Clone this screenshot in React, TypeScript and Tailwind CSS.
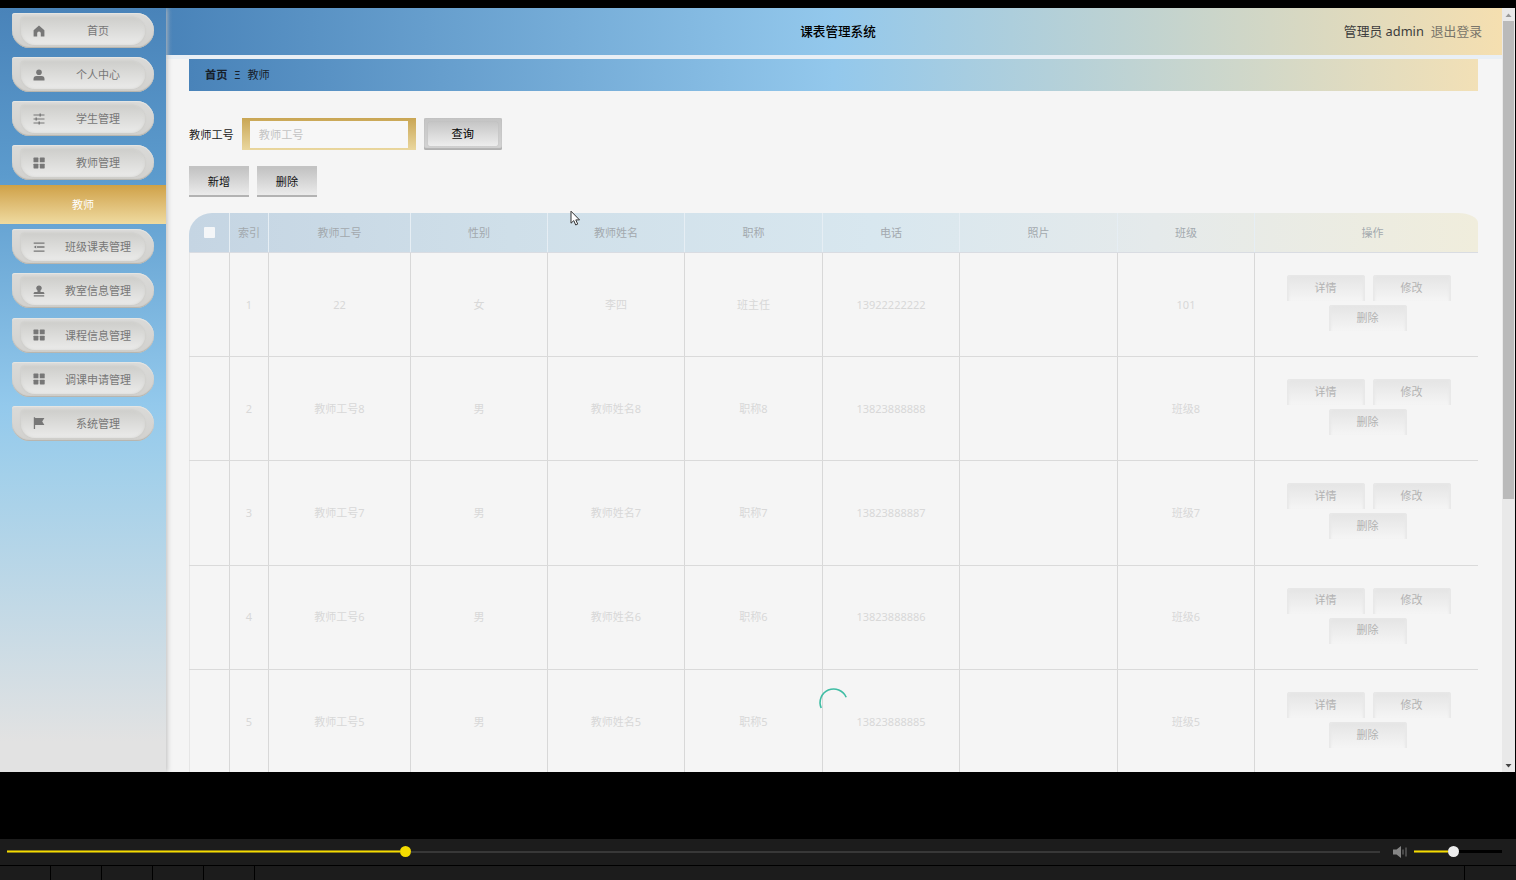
import React from 'react';

type IconName = 'home' | 'user' | 'operation' | 'grid' | 'fold' | 'stamp' | 'flag';

const menuTop: { icon: IconName; label: string }[] = [
  { icon: 'home', label: '首页' },
  { icon: 'user', label: '个人中心' },
  { icon: 'operation', label: '学生管理' },
  { icon: 'grid', label: '教师管理' },
];

const menuBottom: { icon: IconName; label: string }[] = [
  { icon: 'fold', label: '班级课表管理' },
  { icon: 'stamp', label: '教室信息管理' },
  { icon: 'grid', label: '课程信息管理' },
  { icon: 'grid', label: '调课申请管理' },
  { icon: 'flag', label: '系统管理' },
];

const columns = ['索引', '教师工号', '性别', '教师姓名', '职称', '电话', '照片', '班级'];

const rows = [
  ['1', '22', '女', '李四', '班主任', '13922222222', '', '101'],
  ['2', '教师工号8', '男', '教师姓名8', '职称8', '13823888888', '', '班级8'],
  ['3', '教师工号7', '男', '教师姓名7', '职称7', '13823888887', '', '班级7'],
  ['4', '教师工号6', '男', '教师姓名6', '职称6', '13823888886', '', '班级6'],
  ['5', '教师工号5', '男', '教师姓名5', '职称5', '13823888885', '', '班级5'],
];

const gridCols = 'grid grid-cols-[41px_39px_142px_137px_137px_138px_137px_158px_137px_223px]';

const MenuIcon: React.FC<{ name: IconName }> = ({ name }) => (
  <svg width="12" height="12" viewBox="0 0 12 12" fill="currentColor" className="shrink-0">
    {name === 'home' && <path d="M6 .6 11.4 5.2V11.4H7.8V8.2a1.8 1.8 0 0 0-3.6 0v3.2H.6V5.2z" />}
    {name === 'user' && (
      <>
        <circle cx="6" cy="3.2" r="2.8" />
        <path d="M.5 11.4V10a3 3 0 0 1 3-3h5a3 3 0 0 1 3 3v1.4z" />
      </>
    )}
    {name === 'operation' && (
      <path d="M.5 1.6h6V.6h1.4v1h3.6v1H7.9v1H6.5v-1h-6zM.5 5.5h2V4.6h1.4v.9h7.6v1H3.9v1H2.5v-1h-2zM.5 9.4h5v-1h1.4v1h4.6v1H6.9v1H5.5v-1h-5z" />
    )}
    {name === 'grid' && (
      <>
        <rect x=".5" y=".6" width="4.9" height="4.7" rx=".6" />
        <rect x="6.8" y=".6" width="4.9" height="4.7" rx=".6" />
        <rect x=".5" y="6.7" width="4.9" height="4.7" rx=".6" />
        <rect x="6.8" y="6.7" width="4.9" height="4.7" rx=".6" />
      </>
    )}
    {name === 'fold' && <path d="M.7 1.4h10.8v1.4H.7zM4 5.3h7.5v1.4H4zM.7 9.4h10.8v1.4H.7zM.7 6 3.2 4.5v3z" />}
    {name === 'stamp' && (
      <path d="M6 .4a2.7 2.7 0 0 1 1.5 5v1.5h2.3c1 0 1.6.6 1.6 1.5v.7H.6v-.7c0-.9.6-1.5 1.6-1.5h2.3V5.4A2.7 2.7 0 0 1 6 .4zM.8 10.2h10.4v1.2H.8z" />
    )}
    {name === 'flag' && <path d="M.8.2h1.3v11.7H.8zM2 1h9.4L9.2 4.4l2.2 3.5H2z" />}
  </svg>
);

const MenuItem: React.FC<{ icon: IconName; label: string }> = ({ icon, label }) => (
  <div className="ml-3 mb-[9.1px] h-[35px] w-[142px] rounded-[3px_18px_18px_18px] bg-gradient-to-b from-[#dadad8] to-[#d2d1ce] px-[9px] pt-1 pb-[3px] shadow-[inset_0_1px_1px_#e6e6e4,inset_0_-1px_1px_#b5b3ac]">
    <div className="flex h-full items-center rounded-[3px_14px_14px_14px] bg-gradient-to-b from-[#cececb] to-[#ebebea] pb-px pl-3 text-[#777] shadow-[0_0_2px_#c4c4c0,inset_0_0_3px_#d4d4d1]">
      <MenuIcon name={icon} />
      <span className="flex-1 pl-[11px] pr-[5px] text-center text-[11px] leading-none whitespace-nowrap">{label}</span>
    </div>
  </div>
);

const RowButton: React.FC<{ children: string; className?: string }> = ({ children, className = '' }) => (
  <div
    className={`flex h-[26px] w-[78px] items-center justify-center rounded-t-[3px] bg-gradient-to-b from-[#e4e4e4] to-[#f5f5f5] text-[#b3b3b3] shadow-[inset_3px_2px_2px_-1px_#e8e8e8,inset_-3px_0_2px_-1px_#e8e8e8] ${className}`}
  >
    {children}
  </div>
);

const Sidebar = () => (
  <aside className="z-10 w-[166px] shrink-0 bg-[linear-gradient(180deg,#4983b9_0%,#5c9bcd_22%,#93c9ec_52%,#a3d0ea_61%,#e2e2e2_96%)] pt-[5px] shadow-[1px_0_5px_#bbb]">
    {menuTop.map((m) => (
      <MenuItem key={m.label} {...m} />
    ))}
    <div className="-mt-1 mb-[5px] flex h-[39px] items-center justify-center bg-gradient-to-b from-[#cfa146] to-[#efdba0] pt-px text-[11px] text-white">
      教师
    </div>
    {menuBottom.map((m) => (
      <MenuItem key={m.label} {...m} />
    ))}
  </aside>
);

const TeacherTable = () => (
  <div className="mt-4 w-[1289px] text-[11px]">
    <div
      className={`${gridCols} h-[40px] overflow-hidden rounded-[23px_20px_0_0/22px_10px_0_0] border-b border-[#d9dce2] bg-[linear-gradient(90deg,#c5d5e3_0%,#cfdfe9_25%,#d8e7ef_53%,#e5eaeb_75%,#f0eddc_100%)] text-[#a3a9ae]`}
    >
      <div className="flex items-center justify-center border-r border-[#e6eef4]">
        <span className="size-[11px] rounded-[1px] bg-[#f4f6f8]" />
      </div>
      {columns.map((c) => (
        <div key={c} className="flex items-center justify-center border-r border-[#e6eef4] pt-px">
          {c}
        </div>
      ))}
      <div className="flex items-center justify-center pl-3 pt-px">操作</div>
    </div>
    {rows.map((row) => (
      <div key={row[0]} className={`${gridCols} h-[104.2px] border-b border-[#dadada] text-[#d8d8d8]`}>
        <div className="border-r border-l border-r-[#d8d8d8] border-l-[#e6e6e6]" />
        {row.map((cell, i) => (
          <div key={i} className="flex items-center justify-center border-r border-[#d8d8d8] pt-px">
            {cell}
          </div>
        ))}
        <div className="flex flex-wrap content-center justify-center gap-x-2 gap-y-1 pb-[3px] pl-1">
          <RowButton>详情</RowButton>
          <RowButton>修改</RowButton>
          <RowButton className="mr-[2px]">删除</RowButton>
        </div>
      </div>
    ))}
  </div>
);

const Content = () => (
  <main className="min-w-0 flex-1 bg-[#f5f5f5]">
    <header className="flex h-[47px] items-center bg-[linear-gradient(90deg,#4983b9_0%,#93c8ec_50%,#f5dfb0_100%)]">
      <div className="w-[220px]" />
      <h1 className="flex-1 pl-[8px] pt-[2px] text-center text-[12.6px] font-medium text-black">课表管理系统</h1>
      <div className="flex w-[220px] justify-end gap-[7px] pr-5 pt-px text-[12.8px]">
        <span className="text-[#3c3c3c]">管理员 admin</span>
        <span className="text-[#79756a]">退出登录</span>
      </div>
    </header>
    <div className="h-1 bg-[#e9eff5]" />
    <div className="pl-[23px]">
      <div className="flex h-8 w-[1289px] items-center bg-[linear-gradient(90deg,#4983b9_0%,#93c8ec_50%,#f2e0b6_100%)] pl-4 text-[11.2px] text-[#17202a]">
        <b>首页</b>
        <span className="w-[20px] text-center text-[10px]">Ξ</span>
        <span>教师</span>
      </div>
      <div className="mt-[27px] flex h-8 items-center text-[11.2px] text-[#222]">
        <span className="pt-[2px]">教师工号</span>
        <div className="ml-2 h-8 w-[174px] bg-gradient-to-b from-[#c9a653] to-[#ead79e] px-2 pt-[3px] pb-[2px]">
          <div className="flex h-full items-center bg-[#f7f7f7] pl-[9px] pt-px text-[#c4c4c4]">教师工号</div>
        </div>
        <div className="ml-2 h-8 w-[78px] rounded-[2px] bg-gradient-to-b from-[#c4c4c4] to-[#d4d4d4] p-1 shadow-[inset_0_0_1px_#aaa,inset_0_-2px_1px_#b2b2b2]">
          <div className="flex h-full items-center justify-center rounded-[2px] bg-gradient-to-b from-[#c6c6c6] to-[#ededed] pt-px text-black shadow-[0_0_1px_#aaa]">
            查询
          </div>
        </div>
      </div>
      <div className="mt-4 flex gap-2 text-[11.2px] text-[#111]">
        {['新增', '删除'].map((b) => (
          <div
            key={b}
            className="flex h-[31px] w-[60px] items-center justify-center border-t-[3px] border-b-2 border-t-[#c3c3c3] border-b-[#b3b3b3] bg-gradient-to-b from-[#c4c4c4] to-[#ebebeb]"
          >
            {b}
          </div>
        ))}
      </div>
      <TeacherTable />
    </div>
  </main>
);

const Scrollbar = () => (
  <div className="mr-px flex w-[13px] shrink-0 flex-col items-center bg-[#e9e9e9]">
    <svg width="13" height="13" viewBox="0 0 13 13">
      <path d="M3.5 9 6.5 5.5 9.5 9z" fill="#999" />
    </svg>
    <div className="h-[478px] w-[11px] bg-[#bababa]" />
    <svg width="13" height="13" viewBox="0 0 13 13" className="mt-auto">
      <path d="M3.5 5 6.5 8.5 9.5 5z" fill="#444" />
    </svg>
  </div>
);

const PlayerControls = () => (
  <div className="mt-[67px] bg-[#1c1c1c]">
    <div className="flex h-[26px] items-center pb-px pl-[7px] pr-[14px]">
      <div className="h-[3px] w-[393px] border-y border-[#8f8011] bg-[#f5dc00]" />
      <div className="size-[11px] rounded-full bg-[#f5dc00]" />
      <div className="h-[2px] flex-1 bg-[#383838]" />
      <svg width="16" height="14" viewBox="0 0 16 14" className="mx-[12px] mr-[6px]">
        <path d="M1 4.5h3.5L9 1v12L4.5 9.5H1z" fill="#858585" />
        <path d="M11 4.5v5M14 2.5v9" stroke="#777" strokeWidth="1" />
      </svg>
      <div className="h-[3px] w-[34px] border-y border-[#8f8011] bg-[#f5dc00]" />
      <div className="size-[11px] rounded-full bg-[#ededed]" />
      <div className="h-[3px] w-[43px] bg-black" />
    </div>
    <div className="flex h-[15px] border-t border-black">
      {[0, 1, 2, 3, 4].map((n) => (
        <div key={n} className="w-[51px] border-r border-black" />
      ))}
      <div className="flex-1" />
      <div className="w-[52px] border-l border-black" />
    </div>
  </div>
);

export default function App() {
  return (
    <div className="relative h-[880px] w-[1516px] overflow-hidden bg-black pt-2 font-['Noto_Sans','Noto_Sans_CJK_SC',sans-serif]">
      <div className="flex h-[764px] overflow-hidden">
        <Sidebar />
        <Content />
        <Scrollbar />
      </div>
      <PlayerControls />

      {/* loading spinner */}
      <svg className="absolute left-[817px] top-[686px]" width="32" height="32" viewBox="0 0 32 32" fill="none">
        <path d="M4.2 22A13.3 13.3 0 0 1 29.2 11.2" stroke="#3fbda4" strokeWidth="1.6" />
      </svg>

      {/* mouse pointer */}
      <svg className="absolute left-[570px] top-[210px]" width="12" height="17" viewBox="0 0 12 17">
        <path d="M1 1.2v12l2.8-2.6 1.9 4.4 2-.9-1.9-4.2h3.7z" fill="#fff" stroke="#333" strokeWidth="1" />
      </svg>
    </div>
  );
}
